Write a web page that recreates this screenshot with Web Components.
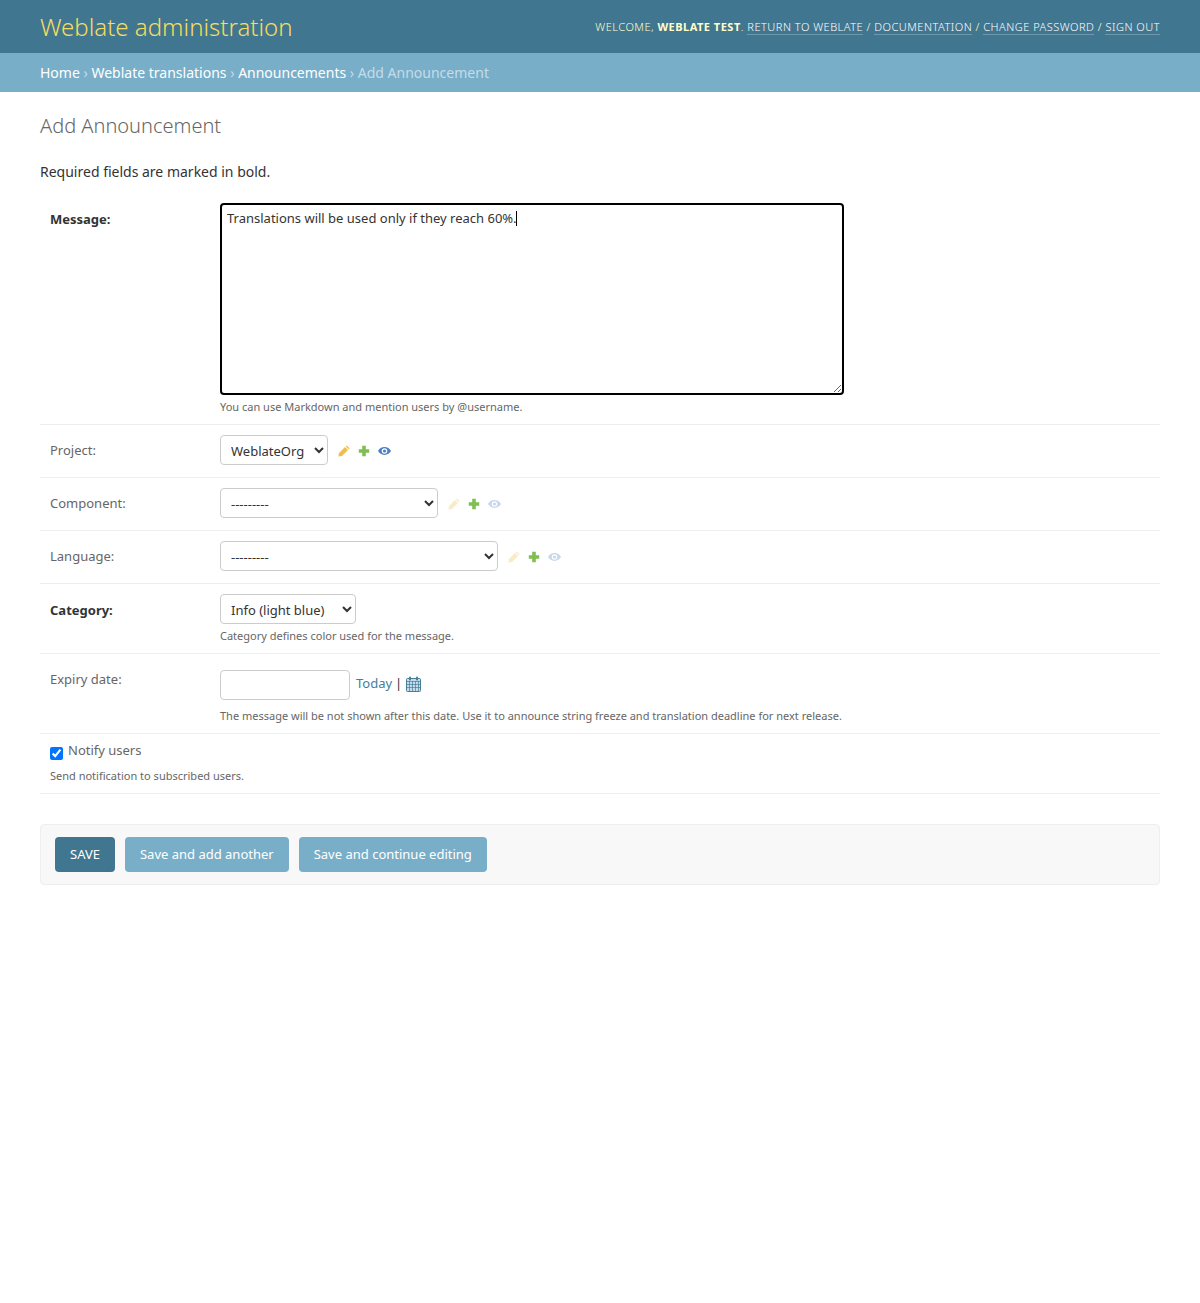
<!DOCTYPE html>
<html>
  <head>
    <title>Add Announcement | Weblate administration</title>
    <meta charset="utf-8">
    <style>
      html, body { margin: 0; padding: 0; background: #fff; }
      body { font-family: "Noto Sans", "Open Sans", sans-serif; font-size: 14px; color: #333; }
      .req { font-weight: 700; color: #333; }
      .label { padding-top: 6px; }
      .label.req { padding-top: 7px; }
      .check { display: flex; align-items: flex-start; gap: 5px; color: #666; font-size: 13px; line-height: 13px; }
      .check input { width: 13px; height: 13px; margin: 3px 0 0; }
      .check + help-text { margin-top: 9px; }
    </style>
    <script>
      function defineElement(name, html, connected) {
        const template = document.createElement('template');
        template.innerHTML = html;
        customElements.define(name, class extends HTMLElement {
          constructor() {
            super();
            this.attachShadow({ mode: 'open' }).appendChild(template.content.cloneNode(true));
          }
          connectedCallback() {
            if (connected) connected.call(this);
          }
        });
      }

      defineElement('admin-header', `
        <style>
          :host { display: flex; justify-content: space-between; align-items: center; box-sizing: border-box; height: 53px; padding: 0 40px; background: #417690; color: #ffc; }
          h1 { margin: 0; font-size: 24px; font-weight: 300; line-height: 28px; color: #f5dd5d; }
          .tools { font-size: 11px; font-weight: 300; line-height: 14px; letter-spacing: .5px; text-transform: uppercase; color: #ffc; }
          a { color: #fff; text-decoration: none; border-bottom: 1px solid rgba(255,255,255,.25); }
          strong { font-weight: 700; }
        </style>
        <h1>Weblate administration</h1>
        <div class="tools">Welcome, <strong>Weblate Test</strong>.
          <a>Return to Weblate</a> /
          <a>Documentation</a> /
          <a>Change password</a> /
          <a>Sign out</a></div>
      `);

      defineElement('admin-breadcrumbs', `
        <style>
          :host { display: block; box-sizing: border-box; height: 39px; padding: 10px 40px; background: #79aec8; font-size: 14px; line-height: 19px; color: #c4dce8; }
          a { color: #fff; }
        </style>
        <a>Home</a> › <a>Weblate translations</a> › <a>Announcements</a> › Add Announcement
      `);

      defineElement('form-row', `
        <style>
          :host { display: block; box-sizing: border-box; padding: 10px; border-bottom: 1px solid #eee; font-size: 13px; }
          :host([data-select]) { padding-bottom: 12px; }
          .line { display: flex; align-items: flex-start; }
          ::slotted([slot=label]) { flex: 0 0 170px; color: #666; font-size: 13px; line-height: 18px; }
          ::slotted(.req) { color: #333; }
          .field { flex: 1; min-width: 0; }
        </style>
        <div class="line"><slot name="label"></slot><div class="field"><slot></slot></div></div>
      `);

      defineElement('help-text', `
        <style>
          :host { display: block; margin-top: 5px; font-size: 11px; line-height: 14px; color: #666; }
        </style>
        <slot></slot>
      `);

      // the textarea as it looks with focus, the caret sits over it
      defineElement('message-box', `
        <style>
          :host { display: block; position: relative; width: 624px; height: 192px; }
          textarea { display: block; box-sizing: border-box; width: 624px; height: 192px; margin: 0; padding: 4px 5px; font: 13px/18px "Noto Sans", sans-serif; color: #333; background: #fff; border: 2px solid #000; border-radius: 4px; outline: none; }
          .caret { position: absolute; left: 296px; top: 8px; width: 1px; height: 15px; background: #000; }
        </style>
        <textarea>Translations will be used only if they reach 60%.</textarea><div class="caret"></div>
      `);

      defineElement('rel-icons', `
        <style>
          :host { display: inline-flex; align-items: center; margin-left: 10px; padding-top: 1px; }
          svg { display: block; height: 12px; }
          .edit { width: 12px; }
          .add { width: 12px; margin-left: 8px; }
          .view { width: 13px; margin-left: 8px; }
          :host([disabled]) .edit, :host([disabled]) .view { opacity: .3; }
        </style>
        <svg class="edit" viewBox="0 0 12 12"><path fill="#eebf4a" d="M8.800.4 11.600 3.200 10.600 4.200 7.800 1.400zM7 2 10 5 4 11 .4 11.600 1 8z"/></svg>
        <svg class="add" viewBox="0 0 12 12"><path fill="#7fbf52" d="M4.200 .8h3.600v3.400h3.400v3.600H7.800v3.400H4.200V7.800H.8V4.200h3.400z"/></svg>
        <svg class="view" viewBox="0 0 14 12"><path fill="#4a7fc4" fill-rule="evenodd" d="M7 1.800C3.900 1.800 1.400 3.600 0 6c1.400 2.400 3.900 4.200 7 4.200s5.600-1.800 7-4.200c-1.400-2.400-3.900-4.200-7-4.200zM7 3a3 3 0 1 1 0 6 3 3 0 0 1 0-6zM7 4.300a1.700 1.700 0 1 0 0 3.400 1.700 1.700 0 0 0 0-3.400z"/></svg>
      `);

      defineElement('select-field', `
        <style>
          :host { display: flex; align-items: center; }
          select { box-sizing: border-box; height: 30px; padding: 1px 0 0 6px; font: 13px "Noto Sans", sans-serif; color: #333; background: #fff; border: 1px solid #ccc; border-radius: 4px; }
        </style>
        <select></select><slot></slot>
      `, function () {
        const select = this.shadowRoot.querySelector('select');
        select.style.width = this.getAttribute('width') + 'px';
        select.innerHTML = `<option>${this.getAttribute('value')}</option>`;
      });

      defineElement('calendar-field', `
        <style>
          :host { display: flex; align-items: center; height: 30px; margin-top: 6px; font-size: 13px; color: #333; }
          input { box-sizing: border-box; width: 130px; height: 30px; margin: 0; padding: 5px 6px; background: #fff; border: 1px solid #ccc; border-radius: 4px; }
          a { margin: 0 0 4px 6px; color: #447e9b; }
          span { margin: 0 4px 4px 3px; }
          svg { display: block; width: 15px; height: 16px; margin-bottom: 2px; }
        </style>
        <input type="text"><a>Today</a><span>|</span>
        <svg viewBox="0 0 15 16">
          <rect x=".5" y="2.500" width="14" height="13" rx="1" fill="#c5dbe6" stroke="#447e9b"/>
          <path d="M1 5.500h13M1 8.500h13M1 11.500h13M3.500 5v10M6.500 5v10M9.500 5v10M12.500 5v10" stroke="#447e9b" stroke-width=".7" fill="none"/>
          <rect x="3" y=".5" width="2" height="4" rx="1" fill="#447e9b"/>
          <rect x="10" y=".5" width="2" height="4" rx="1" fill="#447e9b"/>
        </svg>
      `);

      defineElement('submit-row', `
        <style>
          :host { display: flex; gap: 10px; box-sizing: border-box; height: 61px; margin-top: 30px; padding: 12px 14px; background: #f8f8f8; border: 1px solid #eee; border-radius: 4px; }
          ::slotted(button) { height: 35px; padding: 0 15px 2px; border: 0; border-radius: 4px; background: #79aec8; color: #fff; font: 13px "Noto Sans", sans-serif; }
          ::slotted(button.default) { background: #417690; text-transform: uppercase; }
        </style>
        <slot></slot>
      `);

      defineElement('change-form', `
        <style>
          :host { display: block; padding: 20px 40px 0; }
          h1 { margin: 0; font-size: 20px; font-weight: 300; line-height: 28px; color: #666; }
          p { margin: 22px 0 0; font-size: 14px; line-height: 20px; color: #333; }
          .rows { margin-top: 11px; }
        </style>
        <h1>Add Announcement</h1>
        <p>Required fields are marked in bold.</p>
        <div class="rows"><slot></slot></div>
      `);
    </script>
  </head>
  <body>
    <admin-header></admin-header>
    <admin-breadcrumbs></admin-breadcrumbs>
    <change-form>
      <form-row>
        <label slot="label" class="label req">Message:</label>
        <message-box></message-box>
        <help-text>You can use Markdown and mention users by @username.</help-text>
      </form-row>
      <form-row data-select>
        <label slot="label" class="label">Project:</label>
        <select-field width="108" value="WeblateOrg"><rel-icons></rel-icons></select-field>
      </form-row>
      <form-row data-select>
        <label slot="label" class="label">Component:</label>
        <select-field width="218" value="---------"><rel-icons disabled></rel-icons></select-field>
      </form-row>
      <form-row data-select>
        <label slot="label" class="label">Language:</label>
        <select-field width="278" value="---------"><rel-icons disabled></rel-icons></select-field>
      </form-row>
      <form-row>
        <label slot="label" class="label req">Category:</label>
        <select-field width="136" value="Info (light blue)"></select-field>
        <help-text>Category defines color used for the message.</help-text>
      </form-row>
      <form-row>
        <label slot="label" class="label">Expiry date:</label>
        <calendar-field></calendar-field>
        <help-text style="margin-top:9px">The message will be not shown after this date. Use it to announce string freeze and translation deadline for next release.</help-text>
      </form-row>
      <form-row>
        <div>
          <div class="check"><input type="checkbox" checked><span>Notify users</span></div>
          <help-text>Send notification to subscribed users.</help-text>
        </div>
      </form-row>
      <submit-row>
        <button class="default">Save</button>
        <button>Save and add another</button>
        <button>Save and continue editing</button>
      </submit-row>
    </change-form>
  </body>
</html>
